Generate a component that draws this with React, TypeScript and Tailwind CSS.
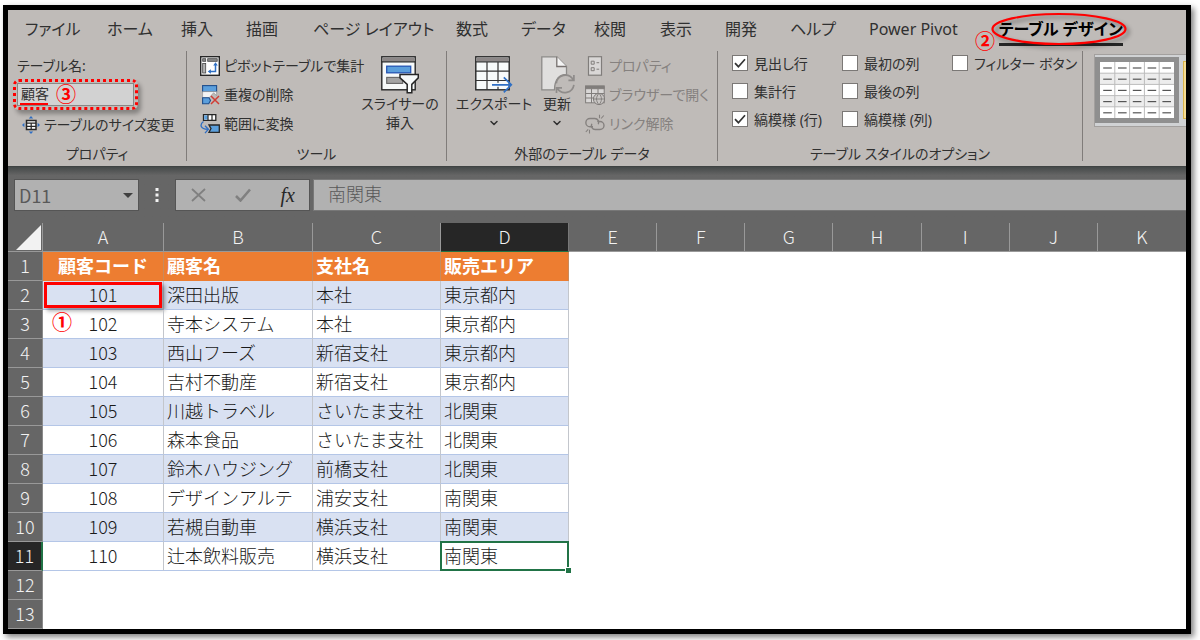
import type { ReactNode } from 'react';
import { ChevronDown } from 'lucide-react';

type Tab = { label: string; width: string };

const TABS: Tab[] = [
  { label: 'ファイル', width: 'w-[82px]' },
  { label: 'ホーム', width: 'w-[74px]' },
  { label: '挿入', width: 'w-[65px]' },
  { label: '描画', width: 'w-[67px]' },
  { label: 'ページ レイアウト', width: 'w-[143px]' },
  { label: '数式', width: 'w-[65px]' },
  { label: 'データ', width: 'w-[73px]' },
  { label: '校閲', width: 'w-[66px]' },
  { label: '表示', width: 'w-[65px]' },
  { label: '開発', width: 'w-[65px]' },
  { label: 'ヘルプ', width: 'w-[79px]' },
  { label: 'Power Pivot', width: 'w-[130px]' },
];

const STYLE_OPTIONS = [
  [
    { label: '見出し行', on: true },
    { label: '集計行', on: false },
    { label: '縞模様 (行)', on: true },
  ],
  [
    { label: '最初の列', on: false },
    { label: '最後の列', on: false },
    { label: '縞模様 (列)', on: false },
  ],
  [{ label: 'フィルター ボタン', on: false }],
];

const COLUMNS = ['A', 'B', 'C', 'D', 'E', 'F', 'G', 'H', 'I', 'J', 'K'];
const EMPTY_COLUMNS = COLUMNS.slice(4);

const CUSTOMERS = [
  ['101', '深田出版', '本社', '東京都内'],
  ['102', '寺本システム', '本社', '東京都内'],
  ['103', '西山フーズ', '新宿支社', '東京都内'],
  ['104', '吉村不動産', '新宿支社', '東京都内'],
  ['105', '川越トラベル', 'さいたま支社', '北関東'],
  ['106', '森本食品', 'さいたま支社', '北関東'],
  ['107', '鈴木ハウジング', '前橋支社', '北関東'],
  ['108', 'デザインアルテ', '浦安支社', '南関東'],
  ['109', '若槻自動車', '横浜支社', '南関東'],
  ['110', '辻本飲料販売', '横浜支社', '南関東'],
];

/* ---------- icons ---------- */

function ResizeIcon() {
  return (
    <svg width="18" height="18" viewBox="0 0 18 18" fill="none">
      <path d="M4.500 4.500h9.500v9H4.500z" fill="#fff" stroke="#262626" strokeWidth="1.500" />
      <path d="M4.500 7.200h9.500M9.200 7v6.500M4.500 10.300h9.500" stroke="#262626" strokeWidth="1.200" />
      <path d="M9 0l2.200 2.400H6.800zM9 18l2.200-2.400H6.800zM0 9l2.400-2.200v4.400zM18 9l-2.400-2.200v4.400z" fill="#2f6fc4" />
    </svg>
  );
}

function PivotIcon() {
  return (
    <svg width="20" height="20" viewBox="0 0 20 20" fill="none">
      <rect x=".7" y=".7" width="18.600" height="18.600" fill="#fff" stroke="#262626" strokeWidth="1.400" />
      <rect x="2.700" y="2.700" width="3" height="2.600" fill="#8a8a8a" stroke="#444" strokeWidth=".8" />
      <rect x="7.700" y="2.700" width="9.500" height="2.600" fill="#8a8a8a" stroke="#444" strokeWidth=".8" />
      <rect x="2.700" y="7.500" width="3" height="9.500" fill="#b5b5b5" stroke="#444" strokeWidth=".8" />
      <path d="M15.500 8v7.500H9.500" stroke="#2f6fc4" strokeWidth="1.500" />
      <path d="M15.500 6.200l2.300 3.200h-4.600zM7.700 15.500l3.200-2.300v4.600z" fill="#2f6fc4" />
    </svg>
  );
}

function DuplicatesIcon() {
  return (
    <svg width="20" height="20" viewBox="0 0 20 20" fill="none">
      <rect x="2.600" y=".6" width="14" height="6" fill="#5b9fdc" stroke="#1f4e8c" strokeWidth="1.100" />
      <path d="M2.600 6.600h14v4l-3-2.800-4.500 5H2.600z" fill="#f4f4f4" stroke="#8a8a8a" strokeWidth=".6" />
      <path d="M2.600 12.800h6.400l1.500 2.700-1.800 3.200H2.600z" fill="#5b9fdc" stroke="#1f4e8c" strokeWidth="1.100" />
      <path d="M11 11l8 8M19 11l-8 8" stroke="#d13c34" strokeWidth="1.500" />
    </svg>
  );
}

function ConvertIcon() {
  return (
    <svg width="20" height="20" viewBox="0 0 20 20" fill="none">
      <path d="M3.500.7h12.300v5.600H3.500z" fill="#fff" stroke="#262626" strokeWidth="1.300" />
      <path d="M4.200 1.400h3.600v4.200H4.200z" fill="#5b9fdc" />
      <path d="M8 .7v5.600M12 .7v5.600" stroke="#262626" strokeWidth="1.200" />
      <path d="M9 11h10.300v7.300H9l2-3.700z" fill="#5b9fdc" stroke="#262626" strokeWidth="1.300" />
      <path d="M3.500 7.500C-.5 10.500.2 15 7.800 15.300M5 11.700l3.400 3.600-3.400 3.800" stroke="#2f6fc4" strokeWidth="1.300" />
    </svg>
  );
}

function SlicerIcon() {
  return (
    <svg width="38" height="38" viewBox="0 0 38 38" fill="none">
      <rect x=".8" y=".8" width="33.400" height="33" fill="#f7fafa" stroke="#262626" strokeWidth="1.400" />
      <rect x="1.500" y="1.500" width="32" height="4" fill="#8c8787" />
      <path d="M.8 5.800h33.400" stroke="#262626" strokeWidth="1.200" />
      <rect x="5.700" y="10.200" width="24" height="6.600" fill="#5b9fdc" stroke="#2556b4" strokeWidth="1.300" />
      <rect x="5.700" y="21.400" width="16" height="6" fill="#a5a5a5" stroke="#666" strokeWidth="1.100" />
      <path d="M19 18.600h18.300v3.200l-6.500 6.600v8.300h-4.600v-8.300L19 21.800z" fill="#f7fafa" stroke="#262626" strokeWidth="1.500" />
    </svg>
  );
}

function ExportIcon() {
  return (
    <svg width="38" height="38" viewBox="0 0 38 38" fill="none">
      <rect x=".8" y=".8" width="33.400" height="33" fill="#f7fafa" stroke="#262626" strokeWidth="1.400" />
      <rect x="1.500" y="1.500" width="32" height="4" fill="#8c8787" />
      <path d="M.8 5.800h33.400M.8 15.200h33.400M.8 24.500h33.400M12 6v28M23 6v28" stroke="#333" strokeWidth="1.200" />
      <path d="M17 28.800h16" stroke="#f7fafa" strokeWidth="4" />
      <path d="M17 28.800h19M28.800 21.300l7.500 7.500-7.500 7.500" stroke="#2f6fc4" strokeWidth="1.700" />
    </svg>
  );
}

function RefreshIcon() {
  return (
    <svg width="36" height="38" viewBox="0 0 36 38" fill="none">
      <path d="M2.800.8h15l9.700 9.700v8c-7 0-12 5-12 15.300H2.800z" fill="#e0dfde" stroke="#8c8a88" strokeWidth="1.300" />
      <path d="M17.800.8v9.700h9.700" fill="#f4f4f4" stroke="#77716f" strokeWidth="1.300" />
      <g stroke="#8f8c8a" strokeWidth="1.700">
        <path d="M17.300 27.300a9 9 0 0 1 16.800-3.600M34.900 19v5.300h-5.500" />
        <path d="M34.900 28.800a9 9 0 0 1-16.600 3.400M17.500 37v-5.200H23" />
      </g>
    </svg>
  );
}

function PropertiesIcon() {
  return (
    <svg width="20" height="20" viewBox="0 0 20 20" fill="none" stroke="#807d7b">
      <rect x="3.500" y=".7" width="13" height="18.500" fill="#d9d7d6" strokeWidth="1.200" />
      <path d="M6.200 5.200h3v3h-3zM6.200 11.700h3v3h-3zM11.500 6.700h2.700M11.500 13.200h2.700" />
    </svg>
  );
}

function BrowserIcon() {
  return (
    <svg width="20" height="20" viewBox="0 0 20 20" fill="none" stroke="#807d7b">
      <rect x=".6" y=".8" width="18.600" height="17" fill="#d9d7d6" />
      <path d="M.6 1.500h18.600v2.200H.6z" fill="#807d7b" />
      <path d="M.6 8.500h18.600M.6 13h18.600M6.500 4v14M13 4v14" />
      <circle cx="14" cy="14" r="5.600" fill="#c9c6c4" />
      <path d="M8.500 14h11M14 8.400c-3.300 3.500-3.300 7.700 0 11.200M14 8.400c3.300 3.500 3.300 7.700 0 11.200" strokeWidth=".9" />
    </svg>
  );
}

function UnlinkIcon() {
  return (
    <svg width="20" height="20" viewBox="0 0 20 20" fill="none" stroke="#85817f" strokeWidth="1.400">
      <path d="M8 12.800H5a4 4 0 0 1 0-8.300h4.800a4 4 0 0 1 3.500 5.800" />
      <path d="M12.300 7.500H15a4 4 0 0 1 0 8h-4.800a4 4 0 0 1-3.400-5.700" />
      <path d="M14.500.7v3.600M18.800 1.500l-2.700 3M4.500 19.500v-3.700M.8 18l2.400-2.700" strokeWidth="1.100" />
    </svg>
  );
}

function StyleThumbnail() {
  const lines = [0, 1, 2, 3, 4];
  return (
    <svg width="74" height="56" viewBox="0 0 74 56" fill="none">
      <rect width="74" height="56" fill="#fff" />
      <path d="M0 11.200h74v11.200H0zM0 33.600h74v11.200H0z" fill="#ededed" />
      <path d="M0 11.200h74M0 22.400h74M0 33.600h74M0 44.800h74M14.800 0v56M29.600 0v56M44.400 0v56M59.200 0v56" stroke="#bcbcbc" />
      {lines.map((r) =>
        lines.map((c) => (
          <path key={`${r}-${c}`} d={`M${c * 14.8 + 3.2} ${r * 11.2 + 6}h8.600`} stroke="#555" strokeWidth="1.200" />
        ))
      )}
    </svg>
  );
}

/* ---------- ribbon parts ---------- */

function Marker({ children, className }: { children: ReactNode; className: string }) {
  return (
    <span className={`absolute z-10 text-[20px] leading-5 font-bold text-[#ff0000] pointer-events-none ${className}`}>
      {children}
    </span>
  );
}

function Group({ title, className, children }: { title: string; className: string; children: ReactNode }) {
  return (
    <section className={`flex h-[110px] shrink-0 flex-col justify-between border-r border-[#807c7a] ${className}`}>
      {children}
      <h2 className="text-center leading-[14px]">{title}</h2>
    </section>
  );
}

function Command({ icon, label, disabled }: { icon: ReactNode; label: string; disabled?: boolean }) {
  return (
    <button
      disabled={disabled}
      className="flex h-[29px] items-center gap-1 whitespace-nowrap disabled:text-[#85817f]"
    >
      {icon}
      {label}
    </button>
  );
}

function CheckOption({ label, on }: { label: string; on: boolean }) {
  return (
    <label className="flex h-6 items-center gap-[6px] whitespace-nowrap">
      <span className="relative size-4">
        <input
          type="checkbox"
          defaultChecked={on}
          className="peer block size-4 appearance-none border border-[#7b7876] bg-white"
        />
        <svg
          className="pointer-events-none absolute inset-0 hidden peer-checked:block"
          width="16" height="16" viewBox="0 0 16 16" fill="none"
        >
          <path d="M3 8.200l3.400 3.500L13 4.300" stroke="#333" strokeWidth="1.700" />
        </svg>
      </span>
      {label}
    </label>
  );
}

function Ribbon() {
  return (
    <header className="overflow-hidden bg-[#bfbbb8] font-['Noto_Sans','Noto_Sans_CJK_JP',sans-serif] text-[#303030] [font-feature-settings:'palt']">
      <nav className="flex h-[37px] items-center pl-[17px] text-[16px] whitespace-nowrap">
        {TABS.map((tab) => (
          <button key={tab.label} className={`shrink-0 text-left ${tab.width}`}>
            {tab.label}
          </button>
        ))}
        <div className="relative shrink-0">
          <button className="block border-y-[3px] border-t-transparent border-b-[#262626] leading-7 font-bold text-black">
            テーブル デザイン
          </button>
          <svg
            className="pointer-events-none absolute top-0 -left-2 h-[34px] w-[136px] drop-shadow-[3px_3px_2px_rgba(0,0,0,0.4)]"
            viewBox="0 0 136 34" fill="none"
          >
            <ellipse cx="68" cy="17" rx="66.500" ry="15" stroke="#ff0000" strokeWidth="2.200" />
          </svg>
          <Marker className="top-5 -left-6">②</Marker>
        </div>
      </nav>

      <div className="flex h-[119px] pt-1 text-[14px]">
        <Group title="プロパティ" className="w-[179px]">
          <div>
            <label htmlFor="table-name" className="flex h-7 items-center pl-[9px]">テーブル名:</label>
            <div className="relative ml-[5px] h-[31px] w-[125px] rounded-md border-[3px] border-dotted border-[#ff0000] p-px shadow-[3px_4px_4px_rgba(0,0,0,0.3)]">
              <input
                id="table-name"
                defaultValue="顧客"
                className="block h-full w-full border border-[#8a8785] bg-[#d2d2d2] px-[3px] pb-[3px] text-[#333]"
              />
              <span className="absolute bottom-[2px] left-1 h-[2px] w-7 bg-[#ff0000]" />
              <Marker className="top-[3px] left-10">③</Marker>
            </div>
            <div className="pl-[14px]">
              <Command icon={<ResizeIcon />} label="テーブルのサイズ変更" />
            </div>
          </div>
        </Group>

        <Group title="ツール" className="w-[260px]">
          <div className="flex">
            <div className="w-[169px] pl-[13px]">
              <Command icon={<PivotIcon />} label="ピボットテーブルで集計" />
              <Command icon={<DuplicatesIcon />} label="重複の削除" />
              <Command icon={<ConvertIcon />} label="範囲に変換" />
            </div>
            <button className="flex w-[88px] flex-col items-center pt-[5px] leading-[19px]">
              <SlicerIcon />
              スライサーの
              <br />
              挿入
            </button>
          </div>
        </Group>

        <Group title="外部のテーブル データ" className="w-[271px]">
          <div className="flex">
            <button className="flex w-[94px] flex-col items-center pt-[5px] leading-[19px]">
              <ExportIcon />
              エクスポート
              <ChevronDown className="mt-1" size={12} strokeWidth={3} />
            </button>
            <button className="flex w-[32px] flex-col items-center pt-[5px] leading-[19px]">
              <RefreshIcon />
              更新
              <ChevronDown className="mt-1" size={12} strokeWidth={3} />
            </button>
            <div className="pl-3">
              <Command disabled icon={<PropertiesIcon />} label="プロパティ" />
              <Command disabled icon={<BrowserIcon />} label="ブラウザーで開く" />
              <Command disabled icon={<UnlinkIcon />} label="リンク解除" />
            </div>
          </div>
        </Group>

        <Group title="テーブル スタイルのオプション" className="w-[365px]">
          <div className="flex pl-[14px]">
            {STYLE_OPTIONS.map((column) => (
              <div key={column[0].label} className="flex w-[110px] flex-col gap-1">
                {column.map((option) => (
                  <CheckOption key={option.label} {...option} />
                ))}
              </div>
            ))}
          </div>
        </Group>

        <div className="mt-[3px] ml-[11px] flex h-[73px] flex-1 items-start gap-1 overflow-hidden border border-r-0 border-[#a3a09e] bg-[#d0d2d4] py-[2px]">
          <button className="shrink-0 border-[5px] border-[#8f8f8f]" aria-label="テーブル スタイル">
            <StyleThumbnail />
          </button>
          <div className="my-1 h-[58px] w-4 shrink-0 border border-[#d9b44a] bg-[#f5dc94]" />
        </div>
      </div>
    </header>
  );
}

function FormulaBar() {
  return (
    <div className="flex h-[57px] items-start border-t border-[#3f4343] bg-linear-to-b from-[#454949] to-[#666] to-15% pt-3 pl-[6px] text-[18px] text-[#595959]">
      <div className="flex h-8 w-[125px] items-center justify-between border border-[#555] bg-[#b1b1b1] pr-[5px] pl-1">
        <input aria-label="名前ボックス" defaultValue="D11" className="w-20" />
        <svg width="10" height="5" viewBox="0 0 10 5"><path d="M0 0h10L5 5z" fill="#404040" /></svg>
      </div>
      <svg className="mx-4 mt-[9px]" width="4" height="14" viewBox="0 0 4 14" fill="#f2f2f2">
        <path d="M.5 0h3v3h-3zM.5 5.500h3v3h-3zM.5 11h3v3h-3z" />
      </svg>
      <div className="flex h-8 w-[135px] items-center justify-between border border-[#555] bg-[#b1b1b1] pr-[14px] pl-[15px]">
        <button aria-label="キャンセル">
          <svg width="15" height="14" viewBox="0 0 15 14" fill="none">
            <path d="M1 1l13 12M14 1L1 13" stroke="#808080" strokeWidth="1.800" />
          </svg>
        </button>
        <button aria-label="入力">
          <svg width="16" height="14" viewBox="0 0 16 14" fill="none">
            <path d="M1 8l4.500 4.500L15 1.500" stroke="#808080" strokeWidth="2.600" />
          </svg>
        </button>
        <button className="font-['Liberation_Serif',serif] text-[20px] leading-6 text-[#262626] italic">fx</button>
      </div>
      <input
        aria-label="数式バー"
        defaultValue="南関東"
        className="ml-[3px] h-8 min-w-0 flex-1 border border-r-0 border-[#777] bg-[#b1b1b1] pb-1 pl-[14px] font-light"
      />
    </div>
  );
}

/* ---------- sheet ---------- */

function RowHeader({ n, active }: { n: number; active?: boolean }) {
  return (
    <th
      scope="row"
      className={
        active
          ? 'border-r-2 border-b border-r-[#217346] border-b-[#999] bg-[#262626] font-light text-[#f2f2f2]'
          : 'border-r border-b border-r-[#8a8a8a] border-b-[#999] bg-[#666] font-light text-[#f2f2f2]'
      }
    >
      {n}
    </th>
  );
}

function Sheet() {
  return (
    <table className="w-full table-fixed border-separate border-spacing-0 text-[18px] leading-6 font-light text-[#1a1a1a] [&_td]:h-[29px] [&_td]:p-0 [&_td]:pb-[3px] [&_th]:h-[29px] [&_th]:p-0 [&_th]:pb-[3px]">
      <colgroup>
        <col className="w-[35px]" />
        <col className="w-[121px]" />
        <col className="w-[149px]" />
        <col className="w-[128px]" />
        <col className="w-[128px]" />
        {EMPTY_COLUMNS.map((c) => <col key={c} />)}
      </colgroup>
      <thead>
        <tr className="bg-[#666]">
          <th className="border-r border-b border-r-[#999] border-b-[#999] pb-0!">
            <svg className="ml-2" width="25" height="25" viewBox="0 0 25 25">
              <path d="M25 0v25H0z" fill="#f2f2f2" />
            </svg>
          </th>
          {COLUMNS.map((c) => (
            <th
              key={c}
              scope="col"
              className={
                c === 'D'
                  ? 'border-r border-b border-r-[#777] border-b-[#217346] bg-[#262626] font-light text-[#f2f2f2]'
                  : 'border-r border-b border-[#999] font-light text-[#f2f2f2] last:border-r-0'
              }
            >
              {c}
            </th>
          ))}
        </tr>
      </thead>
      <tbody>
        <tr>
          <RowHeader n={1} />
          {['顧客コード', '顧客名', '支社名', '販売エリア'].map((h) => (
            <td
              key={h}
              className="border-r border-[#c98a5c] bg-[#ed7d31] pl-[3px]! font-bold text-white first-of-type:pl-0! first-of-type:text-center"
            >
              {h}
            </td>
          ))}
          <td colSpan={7} className="bg-white" />
        </tr>
        {CUSTOMERS.map((row, i) => (
          <tr key={row[0]} className="odd:bg-white even:bg-[#d9e1f2]">
            <RowHeader n={i + 2} active={i === 9} />
            {row.map((value, c) => (
              <td
                key={c}
                className="relative border-r border-b border-r-[#c3c6cc] border-b-[#b4c6e7] pl-[3px]! whitespace-nowrap first-of-type:pl-0! first-of-type:text-center"
              >
                {value}
                {i === 0 && c === 0 && (
                  <span className="absolute inset-px border-3 border-[#ff0000] shadow-[3px_3px_4px_rgba(0,0,0,0.35)]" />
                )}
                {i === 1 && c === 0 && <Marker className="top-[2px] left-[9px]">①</Marker>}
                {i === 9 && c === 3 && (
                  <span className="absolute -inset-px border-2 border-[#217346]">
                    <span className="absolute -right-1 -bottom-1 size-[6px] border-t border-l border-white bg-[#217346]" />
                  </span>
                )}
              </td>
            ))}
            <td colSpan={7} className="bg-white" />
          </tr>
        ))}
        {[12, 13].map((n) => (
          <tr key={n} className="bg-white">
            <RowHeader n={n} />
            <td colSpan={11} />
          </tr>
        ))}
      </tbody>
    </table>
  );
}

export default function App() {
  return (
    <div className="overflow-hidden bg-white pt-[5px] pr-[9px] pb-[6px] pl-[3px]">
      <main className="border-[5px] border-black bg-white font-['Noto_Sans_CJK_JP',sans-serif] shadow-[3px_3px_6px_rgba(0,0,0,0.5)]">
        <Ribbon />
        <FormulaBar />
        <Sheet />
      </main>
    </div>
  );
}
